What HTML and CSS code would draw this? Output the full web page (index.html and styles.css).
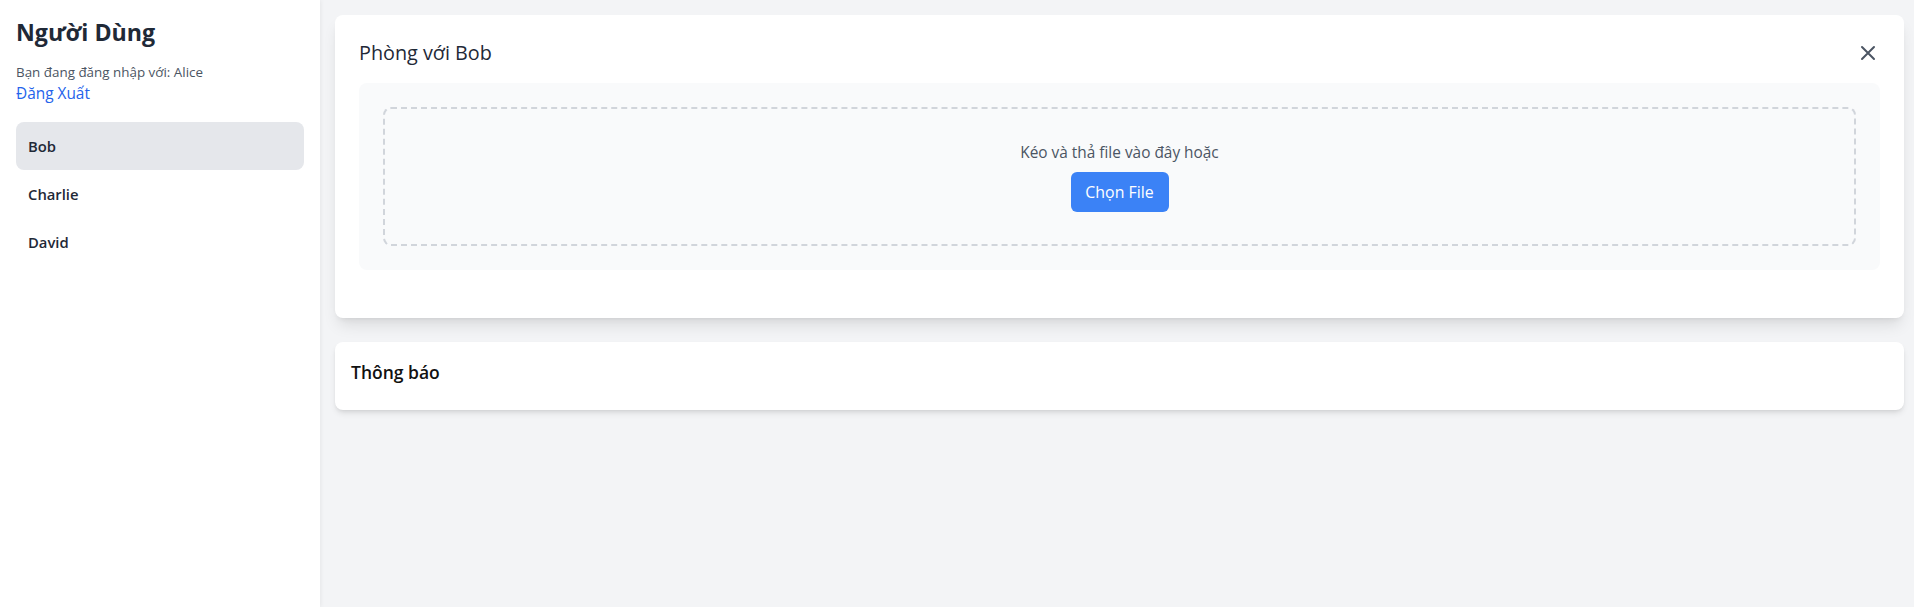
FILE: index.html
```html
<!DOCTYPE html>
<html lang="vi">
<head>
<meta charset="utf-8">
<title>Chat</title>
<link rel="stylesheet" href="styles.css">
</head>
<body>
<div class="app">
  <aside class="sidebar">
    <h2 class="sidebar-title">Người Dùng</h2>
    <p class="login-info">Bạn đang đăng nhập với: Alice</p>
    <a class="logout" href="#">Đăng Xuất</a>
    <ul class="user-list">
      <li class="user-item active">Bob</li>
      <li class="user-item">Charlie</li>
      <li class="user-item">David</li>
    </ul>
  </aside>
  <main class="main">
    <section class="card room">
      <div class="room-header">
        <h3 class="room-title">Phòng với Bob</h3>
        <button class="close-btn" aria-label="Đóng">
          <svg width="24" height="24" viewBox="0 0 24 24" fill="none" stroke="currentColor" stroke-width="2" stroke-linecap="round" stroke-linejoin="round"><path d="M6 18L18 6M6 6l12 12"/></svg>
        </button>
      </div>
      <div class="drop-area">
        <div class="drop-zone">
          <p class="drop-text">Kéo và thả file vào đây hoặc</p>
          <button class="choose-btn">Chọn File</button>
        </div>
      </div>
    </section>
    <section class="card notices">
      <h3 class="notices-title">Thông báo</h3>
    </section>
  </main>
</div>
</body>
</html>
```
FILE: styles.css
```css
* { box-sizing: border-box; }
html, body { margin: 0; padding: 0; height: 100%; }
body {
  font-family: "Open Sans", "Noto Sans", sans-serif;
  color: #1f2937;
  background: #f3f4f6;
}
.app {
  display: flex;
  height: 607px;
}
.sidebar {
  width: 320px;
  flex: 0 0 320px;
  background: #fff;
  padding: 16px;
  box-shadow: 1px 0 4px rgba(0,0,0,0.06);
  position: relative;
  z-index: 1;
}
.sidebar-title {
  margin: 0;
  font-size: 23.2px;
  line-height: 32px;
  font-weight: 700;
  color: #1f2937;
}
.login-info {
  margin: 14px 0 0;
  font-size: 13.4px;
  line-height: 20px;
  color: #4b5563;
}
.logout {
  display: block;
  font-size: 15.4px;
  line-height: 24px;
  color: #2563eb;
  text-decoration: none;
}
.user-list {
  list-style: none;
  margin: 16px 0 0;
  padding: 0;
}
.user-item {
  height: 48px;
  padding: 12px 12px;
  font-size: 14.8px;
  line-height: 24px;
  font-weight: 600;
  color: #1f2937;
  border-radius: 8px;
}
.user-item.active { background: #e5e7eb; }
.main {
  flex: 1;
  padding: 15px 10px 14px 15px;
  display: flex;
  flex-direction: column;
  gap: 24px;
}
.card {
  background: #fff;
  border-radius: 8px;
}
.room {
  padding: 24px;
  box-shadow: 0 10px 15px -3px rgba(0,0,0,0.1), 0 4px 6px -4px rgba(0,0,0,0.1);
}
.room-header {
  display: flex;
  justify-content: space-between;
  align-items: center;
  margin-bottom: 16px;
  height: 28px;
}
.room-title {
  margin: 0;
  font-size: 19.8px;
  line-height: 28px;
  font-weight: 500;
  color: #1f2937;
}
.close-btn {
  border: 0;
  background: none;
  padding: 0;
  width: 24px;
  height: 24px;
  color: #4b5563;
  cursor: pointer;
  display: block;
}
.close-btn svg { display: block; }
.drop-area {
  background: #f9fafb;
  border-radius: 8px;
  padding: 24px;
  margin-bottom: 24px;
}
.drop-zone {
  border: 2px dashed #d1d5db;
  border-radius: 8px;
  padding: 32px;
  text-align: center;
}
.drop-text {
  margin: 0 0 7px;
  font-size: 15.4px;
  line-height: 24px;
  color: #4b5563;
}
.choose-btn {
  font-family: inherit;
  border: 0;
  background: #3b82f6;
  color: #fff;
  border-radius: 6px;
  height: 40px;
  width: 98px;
  padding: 0 8px;
  font-size: 15.9px;
  line-height: 24px;
}
.notices {
  padding: 16px;
  height: 68px;
  box-shadow: 0 4px 6px -1px rgba(0,0,0,0.1), 0 2px 4px -2px rgba(0,0,0,0.1);
}
.notices-title {
  margin: 0;
  font-size: 17.5px;
  line-height: 28px;
  font-weight: 600;
  color: #111;
}
```
